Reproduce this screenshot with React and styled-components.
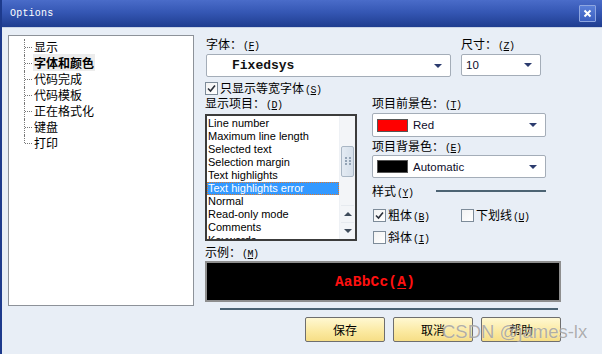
import styled, { createGlobalStyle } from "styled-components";

const GlobalStyle = createGlobalStyle`
  html, body {
    margin: 0;
    padding: 0;
    background: #ffffff;
  }
  body {
    font-family: "Noto Sans CJK SC", "Liberation Sans", sans-serif;
    font-size: 12px;
    color: #000;
  }
`;

const CJK = `"Noto Sans CJK SC", "Liberation Sans", sans-serif`;
const LATIN = `"Liberation Sans", "Noto Sans CJK SC", sans-serif`;
const MONO = `"Liberation Mono", "DejaVu Sans Mono", monospace`;

const Window = styled.div`
  position: relative;
  width: 602px;
  height: 354px;
  box-sizing: border-box;
  border-left: 2px solid #1d3a8c;
  background: #e8eef6;
  overflow: hidden;
`;

const TitleBar = styled.div`
  height: 27px;
  display: flex;
  align-items: center;
  justify-content: space-between;
  padding: 0 6px 0 8px;
  background: linear-gradient(#4a6cc9, #3557b4 45%, #1f3d8f);
  border-bottom: 1px solid #c9d4e6;
`;

const Title = styled.span`
  font-family: ${MONO};
  font-size: 10px;
  color: #fff;
  letter-spacing: 0.2px;
`;

const CloseBtn = styled.div`
  width: 15px;
  height: 15px;
  display: flex;
  align-items: center;
  justify-content: center;
  border: 1px solid #8ea6e0;
  border-radius: 1px;
  background: linear-gradient(#5a7fd8, #3b5fc0);
`;

const Body = styled.div`
  display: grid;
  grid-template-columns: 186px 356px;
  column-gap: 11px;
  padding: 7px 0 0 6px;
`;

const TreePanel = styled.div`
  height: 271px;
  box-sizing: border-box;
  border: 1px solid #8d9299;
  background: #fff;
  padding: 3px 0 0 15px;
`;

const TreeItem = styled.div`
  position: relative;
  height: 16px;
  line-height: 16px;
  padding-left: 9px;
  font-family: ${CJK};
  font-size: 12px;

  &::before {
    content: "";
    position: absolute;
    left: 0;
    top: 0;
    height: ${(p) => (p.$last ? "8px" : "16px")};
    border-left: 1px dotted #777;
  }
  &::after {
    content: "";
    position: absolute;
    left: 1px;
    top: 8px;
    width: 7px;
    border-top: 1px dotted #777;
  }
`;

const TreeText = styled.span`
  font-weight: ${(p) => (p.$selected ? 700 : 400)};
  background: ${(p) => (p.$selected ? "#ececec" : "transparent")};
  padding: 0 1px;
`;

const Right = styled.div`
  display: flex;
  flex-direction: column;
  padding-top: 1px;
`;

const Label = styled.div`
  height: 16px;
  line-height: 16px;
  margin-top: ${(p) => p.$mt || 0}px;
  font-family: ${CJK};
  font-size: 12px;
  white-space: nowrap;
`;

const Key = styled.span`
  font-family: ${MONO};
  font-size: 10px;
  margin-left: 1px;
  letter-spacing: -0.5px;
  u {
    text-underline-offset: 1px;
  }
`;

const FontRow = styled.div`
  display: grid;
  grid-template-columns: 245px 80px;
  column-gap: 10px;
  padding-left: 1px;
`;

const Combo = styled.div`
  position: relative;
  display: flex;
  align-items: center;
  box-sizing: border-box;
  height: ${(p) => p.$h || 23}px;
  margin-top: ${(p) => p.$mt || 0}px;
  border: 1px solid #a4adb8;
  border-radius: 2px;
  background: #fff;
  padding-left: ${(p) => p.$pl || 4}px;
`;

const Arrow = styled.div`
  position: absolute;
  right: 8px;
  top: 50%;
  margin-top: -2px;
  width: 0;
  height: 0;
  border-left: 4px solid transparent;
  border-right: 4px solid transparent;
  border-top: 4px solid #2b3b6e;
`;

const FixedText = styled.span`
  font-family: ${MONO};
  font-weight: 700;
  font-size: 13px;
  color: #111;
`;

const ComboText = styled.span`
  font-family: ${LATIN};
  font-size: 11.5px;
  color: #0d0d2a;
`;

const Swatch = styled.div`
  width: 31px;
  height: 13px;
  box-sizing: border-box;
  border: 1px solid #555;
  background: ${(p) => p.$color};
  margin-right: 5px;
`;

const CheckRow = styled.div`
  display: flex;
  align-items: center;
  height: 14px;
  margin-top: ${(p) => p.$mt || 0}px;
`;

const Box = styled.div`
  width: 11px;
  height: 11px;
  border: 1px solid #7d8b99;
  background: linear-gradient(135deg, #f2f2f2, #fff);
  display: flex;
  align-items: center;
  justify-content: center;
  margin-right: 2px;
`;

const MidGrid = styled.div`
  display: grid;
  grid-template-columns: 152px 174px;
  column-gap: 15px;
`;

const Col = styled.div`
  display: flex;
  flex-direction: column;
`;

const ListBox = styled.div`
  margin-top: 3px;
  height: 127px;
  box-sizing: border-box;
  border: 2px solid #3c3c3c;
  background: #fff;
  display: grid;
  grid-template-columns: 1fr 16px;
  overflow: hidden;
`;

const Items = styled.div`
  padding-top: 1px;
`;

const ListItem = styled.div`
  height: 13px;
  line-height: 13px;
  padding-left: 1px;
  font-family: ${LATIN};
  font-size: 11px;
  white-space: nowrap;
  color: ${(p) => (p.$sel ? "#fff" : "#000")};
  background: ${(p) => (p.$sel ? "#3399ff" : "transparent")};
  outline: ${(p) => (p.$sel ? "1px dotted #e07a2a" : "none")};
  outline-offset: -1px;
`;

const ScrollBar = styled.div`
  display: flex;
  flex-direction: column;
  background: #f3f5f8;
  border-left: 1px solid #eef1f5;
  padding: 0 1px;
`;

const Thumb = styled.div`
  margin-top: 30px;
  height: 29px;
  border: 1px solid #a9b6c4;
  border-radius: 2px;
  background: linear-gradient(90deg, #e4ebf3, #d5dfea);
  display: flex;
  align-items: center;
  justify-content: center;
`;

const ScrollBtn = styled.div`
  height: 16px;
  display: flex;
  align-items: center;
  justify-content: center;
  border-top: 1px solid #e6eaef;
  margin-top: ${(p) => p.$mt || 0}px;
`;

const Tri = styled.div`
  width: 0;
  height: 0;
  border-left: 4px solid transparent;
  border-right: 4px solid transparent;
  ${(p) =>
    p.$up ? "border-bottom: 4px solid #3e4b5a;" : "border-top: 4px solid #3e4b5a;"}
`;

const StyleRow = styled.div`
  display: flex;
  align-items: center;
  margin-top: 5px;
`;

const Rule = styled.div`
  flex: 1;
  height: 2px;
  background: #4c6373;
  margin-left: 22px;
`;

const OptGrid = styled.div`
  display: grid;
  grid-template-columns: 88px auto;
  row-gap: 8px;
  margin-top: 9px;
  padding-left: 1px;
`;

const Sample = styled.div`
  margin-top: 1px;
  height: 41px;
  box-sizing: border-box;
  border: 2px solid #8e8e8e;
  background: #000;
  display: flex;
  align-items: center;
  justify-content: center;
  padding-right: 16px;
  font-family: ${MONO};
  font-weight: 700;
  font-size: 14.5px;
  color: #ff1010;
  letter-spacing: 0.2px;
  u {
    text-underline-offset: 2px;
  }
`;

const Divider = styled.div`
  height: 2px;
  background: #4c6373;
  margin: 6px 3px 0 15px;
`;

const Buttons = styled.div`
  display: flex;
  justify-content: flex-end;
  gap: 8px;
  margin-top: 7px;
`;

const Button = styled.div`
  width: 80px;
  height: 25px;
  box-sizing: border-box;
  border: 1px solid #6e6e6e;
  border-radius: 2px;
  background: linear-gradient(#fff8d2, #fbe9a0 60%, #f6de86);
  display: flex;
  align-items: center;
  justify-content: center;
  font-family: ${CJK};
  font-size: 12px;
`;

const Watermark = styled.div`
  position: absolute;
  left: 440px;
  top: 321px;
  font-family: ${LATIN};
  font-size: 18.5px;
  color: rgba(110, 110, 110, 0.55);
  text-shadow: 0 0 1px rgba(255, 255, 255, 0.8);
  pointer-events: none;
`;

const tree = ["显示", "字体和颜色", "代码完成", "代码模板", "正在格式化", "键盘", "打印"];

const items = [
  "Line number",
  "Maximum line length",
  "Selected text",
  "Selection margin",
  "Text highlights",
  "Text highlights error",
  "Normal",
  "Read-only mode",
  "Comments",
  "Keywords",
];

function Check({ checked }) {
  return (
    <Box>
      {checked && (
        <svg width="9" height="9" viewBox="0 0 9 9">
          <path d="M1 4.5 L3.5 7 L8 1.5" fill="none" stroke="#2a2f3a" strokeWidth="1.6" />
        </svg>
      )}
    </Box>
  );
}

function K({ k }) {
  return (
    <Key>
      (<u>{k}</u>)
    </Key>
  );
}

export default function App() {
  return (
    <>
      <GlobalStyle />
      <Window>
        <TitleBar>
          <Title>Options</Title>
          <CloseBtn>
            <svg width="9" height="9" viewBox="0 0 9 9">
              <path d="M1.5 1.5 L7.5 7.5 M7.5 1.5 L1.5 7.5" stroke="#fff" strokeWidth="2" />
            </svg>
          </CloseBtn>
        </TitleBar>
        <Body>
          <TreePanel>
            {tree.map((t, i) => (
              <TreeItem key={t} $last={i === tree.length - 1}>
                <TreeText $selected={i === 1}>{t}</TreeText>
              </TreeItem>
            ))}
          </TreePanel>
          <Right>
            <FontRow>
              <div>
                <Label>
                  字体：<K k="F" />
                </Label>
                <Combo $mt={2} $pl={25}>
                  <FixedText>Fixedsys</FixedText>
                  <Arrow />
                </Combo>
              </div>
              <div>
                <Label>
                  尺寸：<K k="Z" />
                </Label>
                <Combo $mt={2} $h={22}>
                  <ComboText>10</ComboText>
                  <Arrow />
                </Combo>
              </div>
            </FontRow>
            <CheckRow $mt={4}>
              <Check checked />
              <Label>
                只显示等宽字体<K k="S" />
              </Label>
            </CheckRow>
            <MidGrid>
              <Col>
                <Label>
                  显示项目：<K k="D" />
                </Label>
                <ListBox>
                  <Items>
                    {items.map((t) => (
                      <ListItem key={t} $sel={t === "Text highlights error"}>
                        {t}
                      </ListItem>
                    ))}
                  </Items>
                  <ScrollBar>
                    <Thumb>
                      <svg width="6" height="9" viewBox="0 0 6 9">
                        {[0, 3, 6].map((y) =>
                          [0, 4].map((x) => (
                            <rect key={`${x}-${y}`} x={x} y={y} width="2" height="2" fill="#93a3b5" />
                          ))
                        )}
                      </svg>
                    </Thumb>
                    <ScrollBtn $mt={28}>
                      <Tri $up />
                    </ScrollBtn>
                    <ScrollBtn>
                      <Tri />
                    </ScrollBtn>
                  </ScrollBar>
                </ListBox>
              </Col>
              <Col>
                <Label>
                  项目前景色：<K k="T" />
                </Label>
                <Combo $mt={2} $h={24}>
                  <Swatch $color="#ff0000" />
                  <ComboText>Red</ComboText>
                  <Arrow />
                </Combo>
                <Label $mt={1}>
                  项目背景色：<K k="E" />
                </Label>
                <Combo $mt={1}>
                  <Swatch $color="#000000" />
                  <ComboText>Automatic</ComboText>
                  <Arrow />
                </Combo>
                <StyleRow>
                  <Label>
                    样式<K k="Y" />
                  </Label>
                  <Rule />
                </StyleRow>
                <OptGrid>
                  <CheckRow>
                    <Check checked />
                    <Label>
                      粗体<K k="B" />
                    </Label>
                  </CheckRow>
                  <CheckRow>
                    <Check />
                    <Label>
                      下划线<K k="U" />
                    </Label>
                  </CheckRow>
                  <CheckRow>
                    <Check />
                    <Label>
                      斜体<K k="I" />
                    </Label>
                  </CheckRow>
                </OptGrid>
              </Col>
            </MidGrid>
            <Label $mt={0}>
              示例：<K k="M" />
            </Label>
            <Sample>
              AaBbCc(<u>A</u>)
            </Sample>
            <Divider />
            <Buttons>
              <Button>保存</Button>
              <Button>取消</Button>
              <Button>帮助</Button>
            </Buttons>
          </Right>
        </Body>
        <Watermark>CSDN @james-lx</Watermark>
      </Window>
    </>
  );
}
